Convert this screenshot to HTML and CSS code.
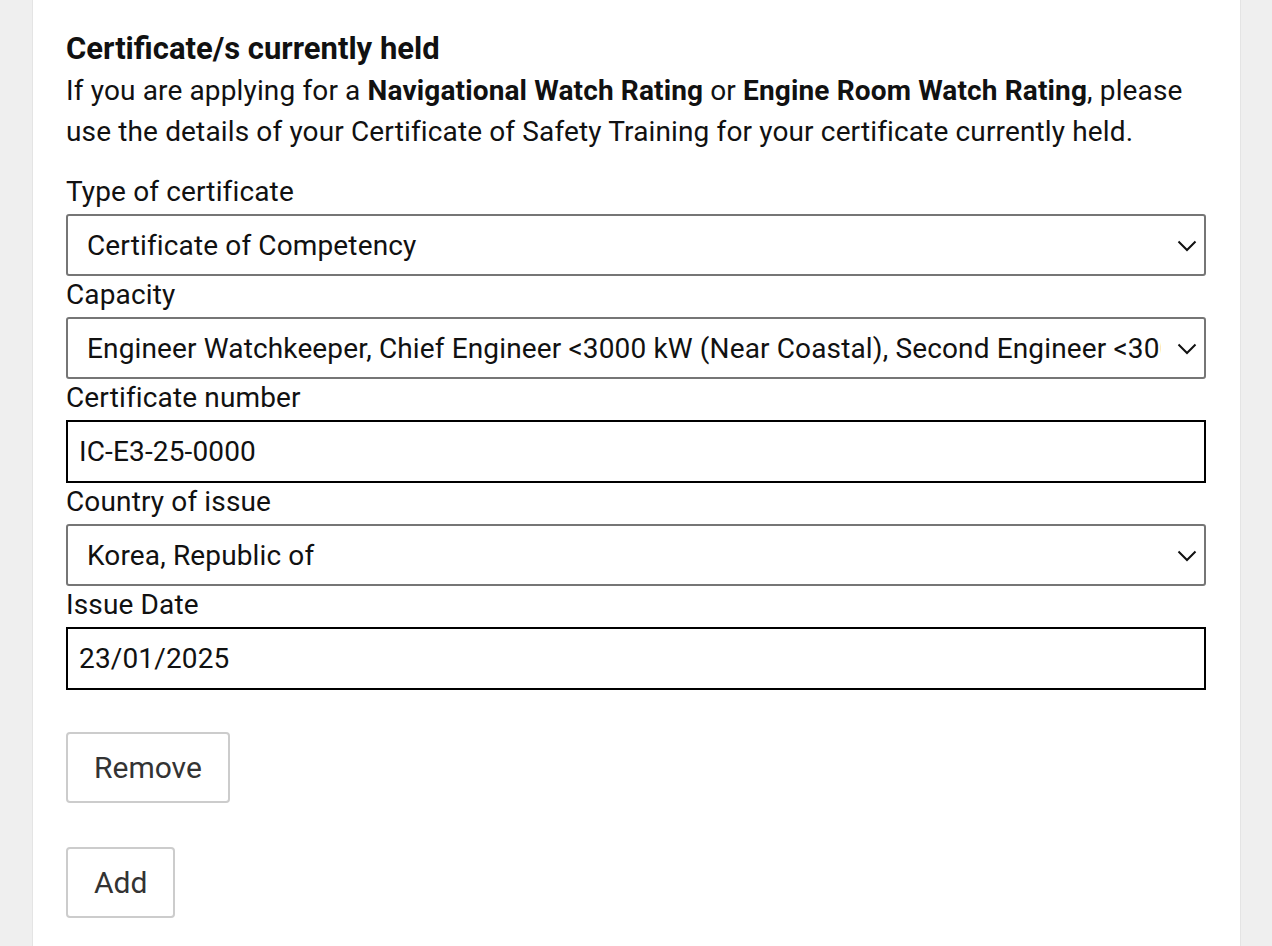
FILE: index.html
```html
<!DOCTYPE html>
<html lang="en">
<head>
<meta charset="utf-8">
<title>Certificates</title>
<link rel="stylesheet" href="styles.css">
</head>
<body>
<main class="card">
  <h2 class="title">Certificate/s currently held</h2>
  <p class="intro">If you are applying for a <strong>Navigational Watch Rating</strong> or <strong>Engine Room Watch Rating</strong>, please use the details of your Certificate of Safety Training for your certificate currently held.</p>

  <div class="field">
    <label class="label">Type of certificate</label>
    <div class="select">
      <span class="select-text">Certificate of Competency</span>
      <svg class="chev" width="20" height="12" viewBox="0 0 20 12"><path d="M1.5 1.5 L10 10 L18.5 1.5" fill="none" stroke="#111" stroke-width="2"/></svg>
    </div>
  </div>
  <div class="field">
    <label class="label">Capacity</label>
    <div class="select">
      <span class="select-text">Engineer Watchkeeper, Chief Engineer &lt;3000 kW (Near Coastal), Second Engineer &lt;3000 kW</span>
      <svg class="chev" width="20" height="12" viewBox="0 0 20 12"><path d="M1.5 1.5 L10 10 L18.5 1.5" fill="none" stroke="#111" stroke-width="2"/></svg>
    </div>
  </div>
  <div class="field">
    <label class="label">Certificate number</label>
    <div class="input">IC-E3-25-0000</div>
  </div>
  <div class="field">
    <label class="label">Country of issue</label>
    <div class="select">
      <span class="select-text">Korea, Republic of</span>
      <svg class="chev" width="20" height="12" viewBox="0 0 20 12"><path d="M1.5 1.5 L10 10 L18.5 1.5" fill="none" stroke="#111" stroke-width="2"/></svg>
    </div>
  </div>
  <div class="field">
    <label class="label">Issue Date</label>
    <div class="input">23/01/2025</div>
  </div>

  <div class="actions">
    <button class="btn btn-remove">Remove</button>
    <button class="btn btn-add">Add</button>
  </div>
</main>
</body>
</html>
```
FILE: styles.css
```css
* { box-sizing: border-box; }
html, body { margin: 0; padding: 0; }
body {
  background: #efefef;
  font-family: Roboto, "Noto Sans", "Liberation Sans", sans-serif;
  color: #111;
  height: 946px;
  overflow: hidden;
}
.card {
  margin: 0 31px 0 32px;
  background: #fff;
  border-left: 1px solid #e4e4e4;
  border-right: 1px solid #e4e4e4;
  padding: 31px 34px 40px 33px;
  min-height: 946px;
}
.title {
  margin: 0;
  font-size: 31px;
  font-weight: 700;
  line-height: 36px;
  color: #111;
}
.intro {
  margin: 3px 0 21px;
  font-size: 28px;
  line-height: 41px;
  letter-spacing: 0.14px;
}
.intro strong { font-weight: 700; }
.field { display: flex; flex-direction: column; }
.label {
  font-size: 28px;
  line-height: 38px;
  padding-bottom: 3px;
  letter-spacing: 0.14px;
}
.select {
  height: 62px;
  border: 2px solid #767676;
  border-radius: 3px;
  display: flex;
  align-items: center;
  padding: 0 7px 0 19px;
  font-size: 28px;
  letter-spacing: 0.14px;
  gap: 16px;
}
.select-text {
  flex: 1;
  white-space: nowrap;
  overflow: hidden;
}
.chev { flex: none; margin-top: 1px; }
.input {
  height: 63px;
  border: 2px solid #000;
  display: flex;
  align-items: center;
  padding: 0 11px;
  font-size: 28px;
  letter-spacing: 0.14px;
}
.actions {
  display: flex;
  flex-direction: column;
  align-items: flex-start;
  gap: 44px;
  margin-top: 42px;
}
.btn {
  font-family: inherit;
  font-size: 30px;
  color: #333;
  background: #fff;
  border: 2px solid #ccc;
  border-radius: 4px;
  height: 71px;
  padding: 0 26px;
  cursor: pointer;
}
```
